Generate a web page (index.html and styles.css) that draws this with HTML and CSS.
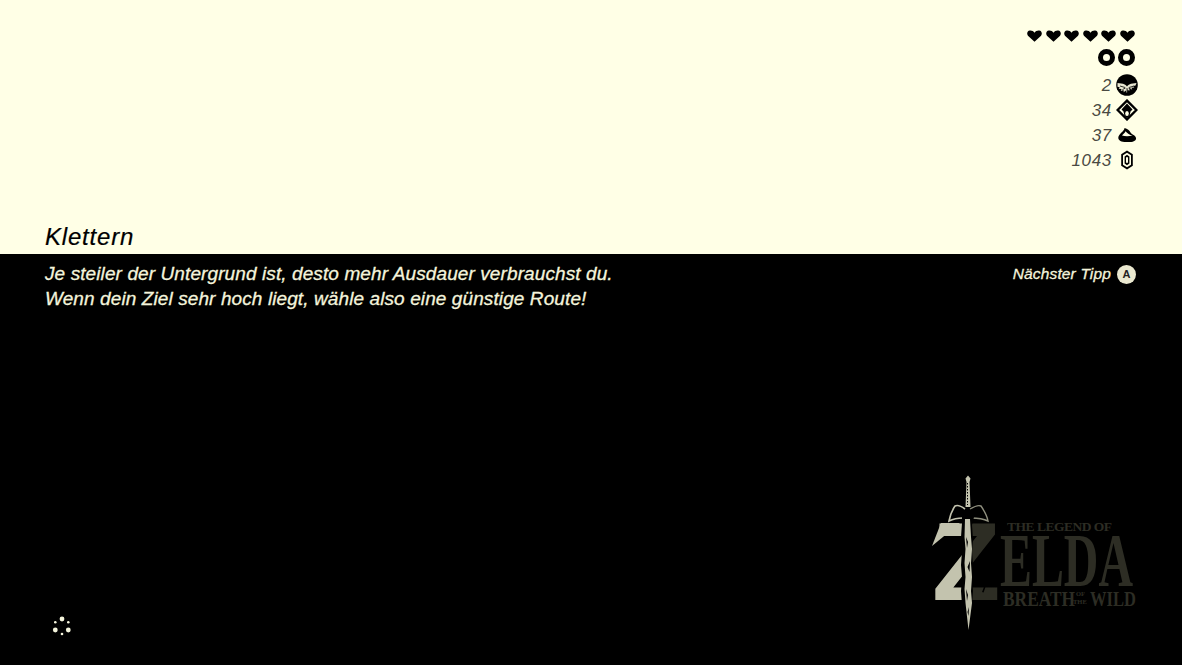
FILE: index.html
```html
<!DOCTYPE html>
<html lang="de">
<head>
    <meta charset="UTF-8">
    <meta name="viewport" content="width=device-width, initial-scale=1.0">
    <title>Klettern</title>
    <link rel="stylesheet" href="styles.css">
</head>
<body>
    <header class="top">
        <div class="stats">
            <div class="hearts">
                <svg class="heart" viewBox="0 0 16 12"><path d="M8 12 1 5.600C-.6 3.600.3.5 3 .2 5 0 7 .8 8 2.400 9 .8 11 0 13 .2c2.700.3 3.600 3.400 2 5.400z"/></svg>
                <svg class="heart" viewBox="0 0 16 12"><path d="M8 12 1 5.600C-.6 3.600.3.5 3 .2 5 0 7 .8 8 2.400 9 .8 11 0 13 .2c2.700.3 3.600 3.400 2 5.400z"/></svg>
                <svg class="heart" viewBox="0 0 16 12"><path d="M8 12 1 5.600C-.6 3.600.3.5 3 .2 5 0 7 .8 8 2.400 9 .8 11 0 13 .2c2.700.3 3.600 3.400 2 5.400z"/></svg>
                <svg class="heart" viewBox="0 0 16 12"><path d="M8 12 1 5.600C-.6 3.600.3.5 3 .2 5 0 7 .8 8 2.400 9 .8 11 0 13 .2c2.700.3 3.600 3.400 2 5.400z"/></svg>
                <svg class="heart" viewBox="0 0 16 12"><path d="M8 12 1 5.600C-.6 3.600.3.5 3 .2 5 0 7 .8 8 2.400 9 .8 11 0 13 .2c2.700.3 3.600 3.400 2 5.400z"/></svg>
                <svg class="heart" viewBox="0 0 16 12"><path d="M8 12 1 5.600C-.6 3.600.3.5 3 .2 5 0 7 .8 8 2.400 9 .8 11 0 13 .2c2.700.3 3.600 3.400 2 5.400z"/></svg>
            </div>
            <div class="rings">
                <span class="ring"></span>
                <span class="ring"></span>
            </div>
            <div class="stat">
                <span>2</span>
                <svg class="stat-icon" viewBox="0 0 22 22">
                    <circle cx="11" cy="11" r="10.800" fill="#000"/>
                    <path d="M1.500 9 7 9.800c1.500.4 3 1.400 4 2.700 1-1.300 2.500-2.300 4-2.700l5.500-.8-1 2.600-2.200.5 1 1.500-2.800.2.700 1.900-2.700-.9-.3 2.200-1.700-1.700L11 19l-1.500-2.500-1.700 1.700-.3-2.200-2.700.9.700-1.900-2.800-.2 1-1.500-2.200-.5z" fill="#e9e8d2"/>
                    <path d="M4 12 9 13.500M18 12l-5 1.500M6.500 15.500 9.500 14M15.500 15.500 12.500 14M11 14v4" stroke="#000" stroke-width=".8"/>
                </svg>
            </div>
            <div class="stat">
                <span>34</span>
                <svg class="stat-icon" viewBox="0 0 22 22">
                    <path d="M11 1.600 20.400 11 11 20.400 1.600 11z" fill="none" stroke="#000" stroke-width="2.400"/>
                    <path d="M11 4.500 16.500 10.500 14.500 12.500 13.500 17 11 19 8.500 17 7.500 12.500 5.500 10.500z" fill="#000"/>
                    <ellipse cx="11" cy="14.500" rx="1.800" ry="2.600" fill="#ffffe6"/>
                </svg>
            </div>
            <div class="stat">
                <span>37</span>
                <svg class="stat-icon" viewBox="0 0 22 22">
                    <path d="M8.500 4C8.500 7 2.500 10 2.300 13.500 2.200 16.800 5.500 18 10 18h4c4 0 6.500-1.800 6-4C19.500 11 16 11 14.500 8.500 13.500 6.500 11.500 4.500 8.500 4z" fill="#000"/>
                    <path d="M9.500 7.200C9 8.800 7 10 6 11.600c3 .9 7 .9 10.500 0C13.500 11 11.500 9.500 9.500 7.200z" fill="#ffffe6"/>
                </svg>
            </div>
            <div class="stat">
                <span>1043</span>
                <svg class="stat-icon" viewBox="0 0 22 22">
                    <path d="M11 1.500 16.800 5.200v11.600L11 20.500 5.200 16.800V5.200z" fill="#000"/>
                    <path d="M11 3.800 15 6.300v9.400L11 18.200 7 15.700V6.300z" fill="#ffffe6"/>
                    <path d="M11 5.800 13.400 7.400v7.200L11 16.200 8.600 14.600V7.400z" fill="#000"/>
                    <path d="M11 8 12 8.600v4.800L11 14 10 13.400V8.600z" fill="#ffffe6"/>
                </svg>
            </div>
        </div>
        <h1 class="title">Klettern</h1>
    </header>

    <main class="content">
        <div class="tip-row">
            <p class="tip">Je steiler der Untergrund ist, desto mehr Ausdauer verbrauchst du.<br>Wenn dein Ziel sehr hoch liegt, wähle also eine günstige Route!</p>
            <div class="next">Nächster Tipp <span class="button-a">A</span></div>
        </div>

        <div class="bottom-row">
            <svg class="spinner" viewBox="0 0 20 20">
                <circle cx="10" cy="3" r="2.400"/>
                <circle cx="3.300" cy="6.300" r="1.300"/>
                <circle cx="16.300" cy="6.300" r="1.300"/>
                <circle cx="3.300" cy="14" r="2.400"/>
                <circle cx="16.300" cy="14" r="2.400"/>
                <circle cx="10" cy="18" r="1.300"/>
            </svg>

            <svg class="logo" viewBox="930 474 210 160">
                <defs>
                    <linearGradient id="half" gradientUnits="userSpaceOnUse" x1="930" y1="0" x2="1000" y2="0">
                        <stop offset="0.54" stop-color="#c3c3ae"/>
                        <stop offset="0.54" stop-color="#2d2d24"/>
                    </linearGradient>
                </defs>
                <text class="logo-z" x="932" y="601" fill="url(#half)">Z</text>
                <polygon points="941,524 960,524 932,547" fill="#c3c3ae"/>
                <text class="logo-dark logo-big" transform="translate(1000 587) scale(.63 1)">ELDA</text>
                <text class="logo-dark logo-small" x="1007" y="532" textLength="105">THE LEGEND OF</text>
                <text class="logo-dark logo-mid" transform="translate(1003 607) scale(.79 1)">BREATH</text>
                <text class="logo-dark logo-tiny" x="1076" y="597">OF</text>
                <text class="logo-dark logo-tiny" x="1073" y="605">THE</text>
                <text class="logo-dark logo-mid" transform="translate(1090 607) scale(.75 1)">WILD</text>
                <!-- flower -->
                <g fill="#000">
                    <path d="M986 558l2 5 5-1-3 4 4 3-5 .5-1 5-3-4-5 2 2-5-3-3 5-1z"/>
                    <path d="M985 575c1 6 0 11-3 18l1.500 .5c3-7 3.500-12 2.500-18.500z"/>
                    <path d="M987 582c3-2 5-3 8-3l-1 3c-2 1-4 1-7 0z"/>
                </g>
                <!-- sword -->
                <path d="M968 476.500l2.500 3-1 3.500 1 25h-5l1-25-1-3.500z" fill="#c3c3ae"/>
                <path d="M967.500 484v22" stroke="#000" stroke-width="1" stroke-dasharray="1.500 1.500"/>
                <path d="M965 510c-4-3-8-4-10-3-2 3-5 9-6 15 4-2 9-3 14-3" fill="none" stroke="#c3c3ae" stroke-width="1.600"/>
                <path d="M970 510c5-3 9-4 11-3 2 3 6 9 7 15-4-2-10-3-17-3" fill="none" stroke="#8f8f7e" stroke-width="1.400"/>
                <path d="M962 518h12l-2 8 1 14-1 12 1 14-1 14 1 12-1 14-4 26h-2l-4-26-1-14 1-14-1-12 1-14-1-14 1-14z" fill="#000"/>
                <path d="M965 520h5l1 18 1 12-1 14 1 14-1 14 1 12-3.500 27-3-27-1-14 1-12-1-14 1-14-1-12z" fill="#c3c3ae"/>
                <path d="M966 538l2 5-1 6zM970 562l-2.500 6 2 5zM966 590l2 6-1 6zM969 608l-1.500 5 1 4z" fill="#000"/>
            </svg>
        </div>
    </main>
</body>
</html>
```

FILE: styles.css
```css
html, body {
    height: 100%;
}

body {
    margin: 0;
    background: #000;
    display: flex;
    flex-direction: column;
    overflow: hidden;
    font-family: "Liberation Sans", Arial, sans-serif;
}

.top {
    height: 254px;
    box-sizing: border-box;
    background: #ffffe6;
    color: #000;
    padding: 30px 46px 0 45px;
    display: flex;
    flex-direction: column;
    justify-content: space-between;
}

.stats {
    display: flex;
    flex-direction: column;
    align-items: flex-end;
}

.hearts {
    display: flex;
    gap: 3.600px;
    height: 14px;
    margin-right: 1px;
}

.heart {
    width: 15px;
    height: 12px;
}

.rings {
    display: flex;
    gap: 3px;
    margin-top: 5px;
    margin-right: 1px;
    height: 23px;
}

.ring {
    width: 7px;
    height: 7px;
    border: 5px solid #000;
    border-radius: 50%;
}

.stat {
    display: flex;
    align-items: center;
    gap: 4px;
    height: 25px;
    margin-right: -2px;
    font-size: 17px;
    font-style: italic;
    letter-spacing: 0.7px;
    color: #4a4a42;
}

.stat span {
    margin-top: 2px;
}

.stat-icon {
    width: 22px;
    height: 22px;
}

.title {
    margin: 0 0 3px;
    font-size: 24px;
    line-height: 28px;
    font-weight: 400;
    font-style: italic;
    letter-spacing: 0.8px;
    -webkit-text-stroke: 0.2px #000;
}

.content {
    flex: 1;
    display: flex;
    flex-direction: column;
    justify-content: space-between;
    padding: 7px 46px 32px 45px;
    color: #f4f4dc;
}

.tip-row {
    display: flex;
    justify-content: space-between;
    align-items: flex-start;
}

.tip {
    margin: 0;
    font-size: 19px;
    line-height: 25px;
    font-style: italic;
    letter-spacing: 0.1px;
    -webkit-text-stroke: 0.3px #f4f4dc;
}

.next {
    display: flex;
    align-items: center;
    gap: 6px;
    height: 25px;
    font-size: 15.500px;
    font-style: italic;
    letter-spacing: 0.15px;
    -webkit-text-stroke: 0.3px #f4f4dc;
}

.button-a {
    width: 19px;
    height: 19px;
    margin-top: 1px;
    border-radius: 50%;
    background: #ebe9d0;
    color: #222;
    font-size: 11px;
    font-weight: 700;
    font-style: normal;
    line-height: 19px;
    text-align: center;
    letter-spacing: 0;
    -webkit-text-stroke: 0;
}

.bottom-row {
    display: flex;
    justify-content: space-between;
    align-items: flex-end;
}

.spinner {
    width: 20px;
    height: 20px;
    margin: 0 0 -3px 7px;
    fill: #f4f4dc;
}

.logo {
    width: 210px;
    height: 160px;
    margin-right: -4px;
}

.logo text {
    font-family: "Liberation Serif", serif;
    font-weight: 700;
}

.logo-dark {
    fill: #2d2d24;
}

.logo .logo-z {
    font-family: "Liberation Sans", sans-serif;
    font-size: 112px;
}

.logo-big {
    font-size: 76px;
}

.logo-small {
    font-size: 13.500px;
}

.logo-mid {
    font-size: 22px;
}

.logo-tiny {
    font-size: 6.500px;
}
```
